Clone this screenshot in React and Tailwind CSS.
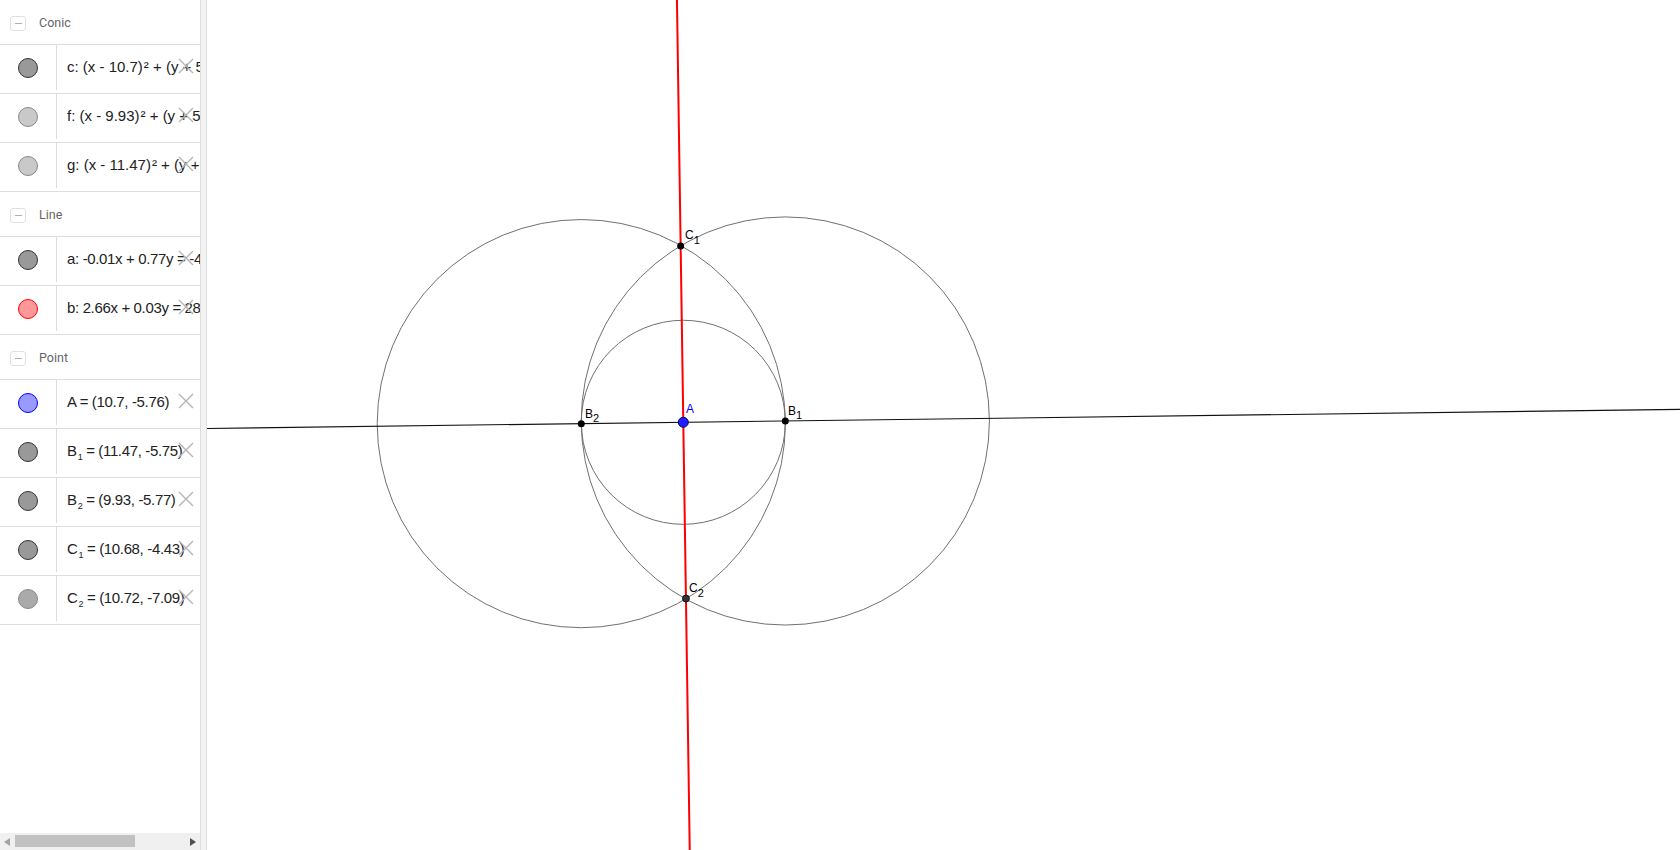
import React from "react";

const S = 132.5;
const X0 = -734.45;
const Y0 = -340.9;
const px = (x) => X0 + x * S;
const py = (y) => Y0 - y * S;

function Sq() {
  return <span className="ml-[1px]">²</span>;
}

const groups = [
  {
    title: "Conic",
    wide: true,
    rows: [
      { dot: "bg-[#999] border-[#333]", text: <>c: (x - 10.7)<Sq /> + (y + 5.76)<Sq /> = 0.59</> },
      { dot: "bg-[#c9c9c9] border-[#888]", text: <>f: (x - 9.93)<Sq /> + (y + 5.77)<Sq /> = 2.37</> },
      { dot: "bg-[#c9c9c9] border-[#888]", text: <>g: (x - 11.47)<Sq /> + (y + 5.75)<Sq /> = 2.37</> },
    ],
  },
  {
    title: "Line",
    rows: [
      { dot: "bg-[#999] border-[#333]", text: <>a: -0.01x + 0.77y = -4.32</> },
      { dot: "bg-[#ff9999] border-[#ff0000]", text: <>b: 2.66x + 0.03y = 28.26</> },
    ],
  },
  {
    title: "Point",
    rows: [
      { dot: "bg-[#9999ff] border-[#0000ff]", text: <>A = (10.7, -5.76)</> },
      { dot: "bg-[#999] border-[#333]", text: <>B<Sub>1</Sub> = (11.47, -5.75)</> },
      { dot: "bg-[#999] border-[#333]", text: <>B<Sub>2</Sub> = (9.93, -5.77)</> },
      { dot: "bg-[#999] border-[#333]", text: <>C<Sub>1</Sub> = (10.68, -4.43)</> },
      { dot: "bg-[#aaa] border-[#888]", text: <>C<Sub>2</Sub> = (10.72, -7.09)</> },
    ],
  },
];

function Sub({ children }) {
  return <span className="text-[9px] relative top-[4px] ml-[1px]">{children}</span>;
}

function Cross() {
  return (
    <svg className="absolute left-[178px] top-[13px]" width="16" height="16" viewBox="0 0 16 16">
      <path d="M1 1 L15 15 M15 1 L1 15" stroke="#b4b4b4" strokeWidth="1.4" fill="none" />
    </svg>
  );
}

function Header({ title }) {
  return (
    <div className="h-[45px] pt-[3px] border-b border-[#dddddd] flex items-center">
      <div className="ml-[10px] w-[16px] h-[15px] border border-[#e0e0e0] rounded-[3px] flex items-center justify-center">
        <div className="w-[7px] h-[1.5px] bg-[#b0b0b0]" />
      </div>
      <span className="ml-[13px] text-[12.5px] text-[#666] font-['Roboto',sans-serif]">{title}</span>
    </div>
  );
}

function Row({ dot, text, wide }) {
  return (
    <div className="relative h-[49px] pb-[3px] border-b border-[#dddddd] flex">
      <div className="w-[57px] shrink-0 border-r border-[#dddddd] flex items-center justify-center">
        <div className={`w-[20px] h-[20px] rounded-full border ${dot}`} />
      </div>
      <div
        className={`pl-[10px] flex items-center whitespace-nowrap text-[15px] text-[#222] font-['Liberation_Sans',sans-serif] ${
          wide ? "tracking-normal" : "tracking-[-0.35px]"
        }`}
      >
        <span>{text}</span>
      </div>
      <Cross />
    </div>
  );
}

function Graphics() {
  const A = [px(10.7), py(-5.76)];
  const B1 = [px(11.47), py(-5.75)];
  const B2 = [px(9.93), py(-5.77)];
  const C1 = [px(10.68), py(-4.43)];
  const C2 = [px(10.72), py(-7.09)];
  const rSmall = Math.hypot(0.77, 0.01) * S;
  const rBig = Math.hypot(1.54, 0.02) * S;
  const ka = (B1[1] - B2[1]) / (B1[0] - B2[0]);
  const ya = (x) => B2[1] + (x - B2[0]) * ka;
  const kb = (C2[0] - C1[0]) / (C2[1] - C1[1]);
  const xb = (y) => C1[0] + (y - C1[1]) * kb;
  const lab = "font-['Liberation_Sans',sans-serif]";
  return (
    <svg className="block" width="1473" height="850" viewBox="207 0 1473 850">
      <g fill="none" stroke="#707070" strokeWidth="1">
        <circle cx={A[0]} cy={A[1]} r={rSmall} />
        <circle cx={B2[0]} cy={B2[1]} r={rBig} />
        <circle cx={B1[0]} cy={B1[1]} r={rBig} />
      </g>
      <line x1="207" y1={ya(207)} x2="1680" y2={ya(1680)} stroke="#111" strokeWidth="1.1" />
      <line x1={xb(0)} y1="0" x2={xb(850)} y2="850" stroke="#ff0000" strokeWidth="2" />
      {[B1, B2, C1].map((p, i) => (
        <circle key={i} cx={p[0]} cy={p[1]} r="3.5" fill="#000" />
      ))}
      <circle cx={C2[0]} cy={C2[1]} r="3.5" fill="#333" stroke="#000" strokeWidth="0.8" />
      <circle cx={A[0]} cy={A[1]} r="5" fill="#1f1fff" stroke="#00006a" strokeWidth="1" />
      <g className={lab} fontSize="12" fill="#000">
        <text x="686" y="413" fill="#0000ff">A</text>
        <text x="585" y="418">B<tspan fontSize="11" dy="4">2</tspan></text>
        <text x="788" y="415">B<tspan fontSize="11" dy="4">1</tspan></text>
        <text x="685" y="239">C<tspan fontSize="11" dy="5">1</tspan></text>
        <text x="689" y="592">C<tspan fontSize="11" dy="5">2</tspan></text>
      </g>
    </svg>
  );
}

export default function App() {
  return (
    <div className="w-[1680px] h-[850px] flex bg-white overflow-hidden">
      <aside className="w-[200px] shrink-0 flex flex-col overflow-hidden">
        <div className="flex-1 overflow-hidden">
          {groups.map((g) => (
            <div key={g.title}>
              <Header title={g.title} />
              {g.rows.map((r, i) => (
                <Row key={i} dot={r.dot} text={r.text} wide={g.wide} />
              ))}
            </div>
          ))}
        </div>
        <div className="h-[17px] bg-[#f0f0f0] flex items-center relative">
          <svg className="absolute left-[4px] top-[5px]" width="6" height="8" viewBox="0 0 6 8">
            <path d="M6 0 L0 4 L6 8 Z" fill="#a3a3a3" />
          </svg>
          <div className="absolute left-[15px] top-[2px] w-[120px] h-[12px] bg-[#c1c1c1]" />
          <svg className="absolute left-[190px] top-[5px]" width="6" height="8" viewBox="0 0 6 8">
            <path d="M0 0 L6 4 L0 8 Z" fill="#505050" />
          </svg>
        </div>
      </aside>
      <div className="w-[7px] shrink-0 bg-[#f3f3f3] border-l border-r border-[#dedede]" />
      <div className="flex-1 relative">
        <Graphics />
      </div>
    </div>
  );
}
